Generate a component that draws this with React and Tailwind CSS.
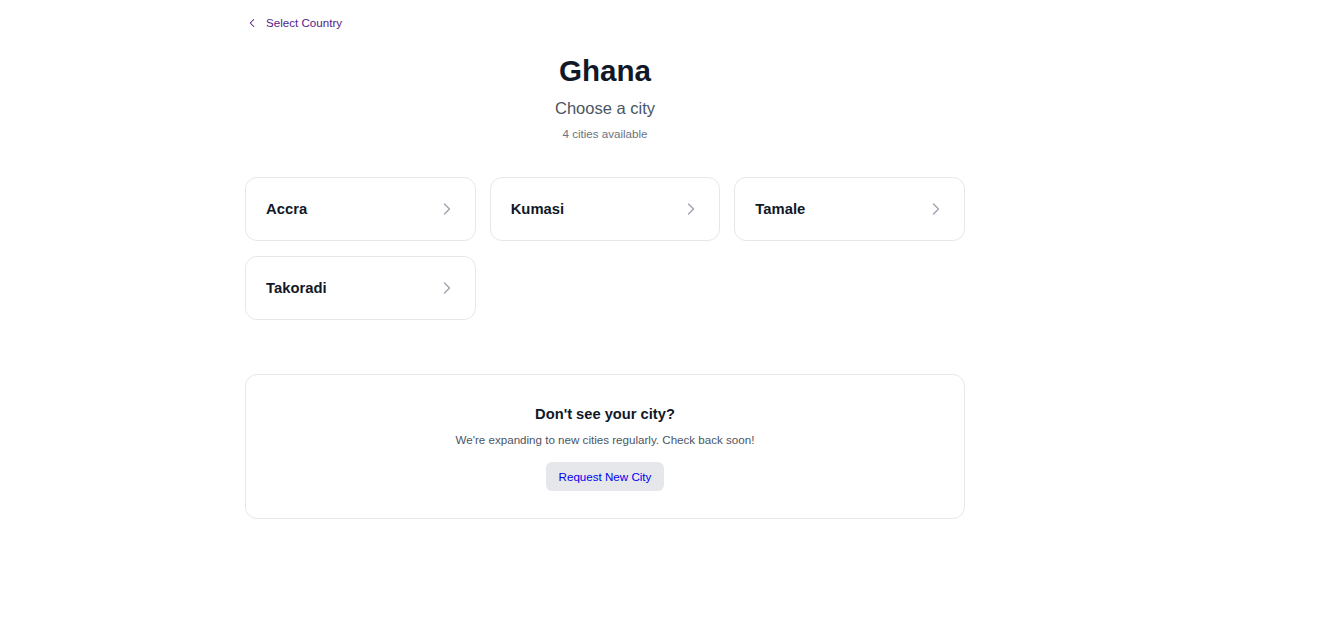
import { ChevronLeft, ChevronRight } from 'lucide-react'

const CITIES = ['Accra', 'Kumasi', 'Tamale', 'Takoradi']

function CityCard({ name }) {
  return (
    <button
      type="button"
      className="flex h-16 items-center justify-between rounded-xl border border-[#e5e7eb] bg-white pl-5 pr-[18px] text-left"
    >
      <span className="text-[14.8px] font-bold text-[#111827]">{name}</span>
      <ChevronRight className="h-5 w-5 text-[#9ca3af]" strokeWidth={1.6} />
    </button>
  )
}

export default function App() {
  return (
    <main className="min-h-screen bg-white font-['Liberation_Sans',Arial,sans-serif]">
      <div className="w-[1210px] pt-[15px]">
        <section className="mx-auto max-w-[720px]">
          <a href="#" className="flex h-4 items-center gap-[7px] text-[11.6px] leading-4 text-[#551a8b]">
            <ChevronLeft className="h-3.5 w-3.5" strokeWidth={1.8} />
            Select Country
          </a>

          <div className="mt-[22px] text-center">
            <h1 className="text-[29.6px] font-bold leading-9 text-[#111827]">Ghana</h1>
            <p className="mt-[7px] text-[16.5px] leading-6 text-[#4b5563]">Choose a city</p>
            <p className="mt-1.5 text-[11.6px] leading-4 text-[#6b7280]">{CITIES.length} cities available</p>
          </div>

          <div className="mt-[35px] grid grid-cols-3 gap-x-3.5 gap-y-[15px]">
            {CITIES.map((city) => (
              <CityCard key={city} name={city} />
            ))}
          </div>

          <div className="mt-[54px] rounded-xl border border-[#e5e7eb] bg-white pb-[27px] pt-[29px] text-center">
            <h2 className="text-[14.7px] font-bold leading-5 text-[#111827]">Don't see your city?</h2>
            <p className="mt-2 text-[11.6px] leading-4 text-[#4b5563]">
              We're expanding to new cities regularly. Check back soon!
            </p>
            <a
              href="#"
              className="mt-3.5 inline-block rounded-md bg-[#e5e7eb] px-[13px] py-[6.5px] text-[11.6px] leading-4 text-[#0000ee]"
            >
              Request New City
            </a>
          </div>
        </section>
      </div>
    </main>
  )
}
